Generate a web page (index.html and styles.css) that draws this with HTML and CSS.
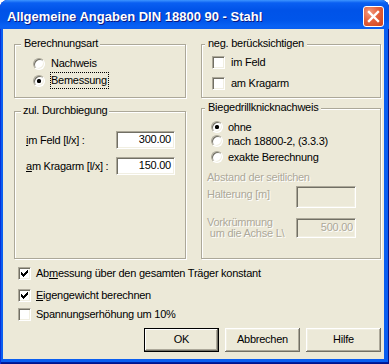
FILE: index.html
```html
<!DOCTYPE html>
<html>
<head>
<meta charset="utf-8">
<link rel="stylesheet" href="styles.css">
</head>
<body>
<div class="window">
  <div class="titlebar">
    <span class="title">Allgemeine Angaben DIN 18800 90 - Stahl</span>
    <span class="close"><svg width="19" height="19" viewBox="0 0 19 19"><path d="M5 5 L14 14 M14 5 L5 14" stroke="#fff" stroke-width="2.4" stroke-linecap="square"/></svg></span>
  </div>
  <div class="client">
    <div class="groups">
      <div class="group">
        <span class="gtitle gt-left">Berechnungsart</span>
        <div class="rows-art">
          <div class="opt"><span class="radio"></span><span class="lbl">Nachweis</span></div>
          <div class="opt"><span class="radio on"></span><span class="lbl focus">Bemessung</span></div>
        </div>
      </div>
      <div class="group">
        <span class="gtitle gt-right">neg. berücksichtigen</span>
        <div class="rows-neg">
          <div class="chk-row"><span class="check"></span><span class="clbl">im Feld</span></div>
          <div class="chk-row"><span class="check"></span><span class="clbl">am Kragarm</span></div>
        </div>
      </div>
      <div class="group g-durch">
        <span class="gtitle gt-left2">zul. Durchbiegung</span>
        <div class="fields">
          <span class="flabel"><u>i</u>m Feld [l/x] :</span><span class="field">300.00</span>
          <span class="flabel"><u>a</u>m Kragarm [l/x] :</span><span class="field">150.00</span>
        </div>
      </div>
      <div class="group">
        <span class="gtitle gt-right">Biegedrillknicknachweis</span>
        <div class="rows-bdk">
          <div class="bopt"><span class="radio on"></span><span class="blbl">ohne</span></div>
          <div class="bopt"><span class="radio"></span><span class="blbl">nach 18800-2, (3.3.3)</span></div>
          <div class="bopt b3"><span class="radio"></span><span class="blbl">exakte Berechnung</span></div>
        </div>
        <div class="dis dis-head">Abstand der seitlichen</div>
        <div class="drow drow-a">
          <span class="dis dlabel-a">Halterung [m]</span>
          <span class="field disabled fa"></span>
        </div>
        <div class="drow drow-b">
          <span class="dis dlabel-b">Vorkrümmung<br>&nbsp;um die Achse L\</span>
          <span class="field disabled fb">500.00</span>
        </div>
      </div>
    </div>
    <div class="opts">
      <div class="orow r1"><span class="check on"><svg width="11" height="11" viewBox="0 0 11 11" shape-rendering="crispEdges"><path d="M8 2H9V5H8V6H7V7H6V8H5V9H4V8H3V7H2V4H3V5H4V6H5V5H6V4H7V3H8Z" fill="#000"/></svg></span><span class="olbl">Ab<u>m</u>essung über den gesamten Träger konstant</span></div>
      <div class="orow r2"><span class="check on"><svg width="11" height="11" viewBox="0 0 11 11" shape-rendering="crispEdges"><path d="M8 2H9V5H8V6H7V7H6V8H5V9H4V8H3V7H2V4H3V5H4V6H5V5H6V4H7V3H8Z" fill="#000"/></svg></span><span class="olbl"><u>E</u>igengewicht berechnen</span></div>
      <div class="orow r3"><span class="check"></span><span class="olbl">Spannungserhöhung um 10%</span></div>
    </div>
    <div class="buttons">
      <span class="btn default">OK</span>
      <span class="btn">Abbrechen</span>
      <span class="btn">Hilfe</span>
    </div>
  </div>
</div>
</body>
</html>
```
FILE: styles.css
```css
* { box-sizing: border-box; }
html, body { margin: 0; padding: 0; background: #fff; }
body {
  width: 389px;
  height: 364px;
  overflow: hidden;
  font-family: "Liberation Sans", Arial, sans-serif;
  font-size: 11px;
  letter-spacing: -0.25px;
  color: #000;
}
u { text-decoration: underline; text-underline-offset: 1px; }

.window {
  width: 389px;
  height: 364px;
  display: flex;
  flex-direction: column;
  background: #0a5ef0;
  border-radius: 8px 8px 0 0;
  overflow: hidden;
  box-shadow: inset 1px 0 #0831d9, inset -1px 0 #00138c, inset 0 -1px #00138c, inset 0 -2px #001ea0;
}

.titlebar {
  height: 29px;
  flex: none;
  display: flex;
  align-items: flex-start;
  padding: 0 5px 0 7px;
  background: linear-gradient(180deg, #3d95ff 0%, #0a5ff2 10%, #0053e8 35%, #0055ea 70%, #0861f4 90%, #0a5ef0 100%);
}
.title {
  padding-top: 9px;
  font-weight: bold;
  font-size: 13px;
  line-height: 15px;
  letter-spacing: 0;
  color: #fff;
  text-shadow: 1px 1px #0a1883;
  white-space: nowrap;
}
.close {
  margin-left: auto;
  margin-top: 6px;
  width: 21px;
  height: 21px;
  border: 1px solid #fff;
  border-radius: 3px;
  background: radial-gradient(circle at 30% 28%, #f39b7f 0%, #e4613d 45%, #cf4219 100%);
  display: flex;
  align-items: center;
  justify-content: center;
}
.close svg { display: block; }

.client {
  flex: 1;
  margin: 0 5px 5px 3px;
  background: #ece9d8;
  display: flex;
  flex-direction: column;
}

.groups {
  display: grid;
  grid-template-columns: 172px 180px;
  grid-template-rows: 54px 151px;
  column-gap: 15px;
  row-gap: 10px;
  margin: 15px 0 0 11px;
}
.group {
  border: 1px solid #aca899;
  box-shadow: inset 1px 1px #fff, 1px 1px #fff;
  display: flex;
  flex-direction: column;
}
.g-durch { margin-top: 3px; }
.gtitle {
  align-self: flex-start;
  margin-top: -8px;
  line-height: 13px;
  height: 13px;
  background: #ece9d8;
  white-space: nowrap;
}
.gt-left { margin-left: 6px; padding: 0 2px 0 3px; }
.gt-left2 { margin-left: 6px; padding: 0 2px 0 2px; }
.gt-right { margin-left: 3px; padding: 0 3px 0 3px; }

/* radios */
.radio {
  flex: none;
  width: 12px;
  height: 12px;
  border-radius: 50%;
  background: #fff;
  border: 1px solid;
  border-color: #aca899 #fff #fff #aca899;
  box-shadow: inset 1px 1px #716f64, inset -1px -1px #f1efe2;
  display: flex;
  align-items: center;
  justify-content: center;
}
.radio.on::after {
  content: "";
  width: 4px;
  height: 4px;
  border-radius: 1.5px;
  background: #000;
}

.rows-art { margin-top: 5px; padding-left: 18px; }
.opt { display: flex; align-items: center; height: 17px; }
.opt .lbl {
  margin-left: 5px;
  height: 17px;
  line-height: 15px;
  border: 1px dotted transparent;
  padding-right: 1px;
}
.opt .lbl.focus { border-color: #000; }

/* checkboxes */
.check {
  flex: none;
  width: 13px;
  height: 13px;
  background: #fff;
  border: 1px solid;
  border-color: #aca899 #fff #fff #aca899;
  box-shadow: inset 1px 1px #716f64, inset -1px -1px #f1efe2;
}
.check svg { display: block; }

.rows-neg { margin-top: 2px; padding-left: 10px; }
.chk-row { display: flex; align-items: center; height: 21px; }
.clbl { margin-left: 6px; line-height: 13px; }

/* fields */
.fields {
  display: grid;
  grid-template-columns: 90px 59px;
  grid-auto-rows: 18px;
  row-gap: 8px;
  margin-top: 14px;
  padding-left: 11px;
  align-items: center;
}
.flabel { line-height: 13px; white-space: nowrap; }
.field {
  height: 18px;
  background: #fff;
  border: 1px solid;
  border-color: #aca899 #fff #fff #aca899;
  box-shadow: inset 1px 1px #716f64, inset -1px -1px #f1efe2;
  text-align: right;
  padding: 0 3px 0 2px;
  line-height: 15px;
}
.field.disabled {
  background: #ece9d8;
  color: #aca899;
  text-shadow: 1px 1px #fff;
}

/* Biegedrillknick */
.rows-bdk { margin-top: 6px; padding-left: 9px; }
.bopt { display: flex; align-items: center; height: 14px; }
.bopt.b3 { margin-top: 2px; }
.blbl { margin-left: 5px; line-height: 13px; white-space: nowrap; }

.dis { color: #aca899; text-shadow: 1px 1px #fff; }
.dis-head { margin-top: 7px; padding-left: 5px; line-height: 13px; white-space: nowrap; }
.drow {
  display: grid;
  grid-template-columns: 89px 60px;
  padding-left: 5px;
  align-items: start;
}
.drow-a { margin-top: 2px; }
.drow-b { margin-top: 10px; }
.dlabel-a { margin-top: 2px; line-height: 13px; white-space: nowrap; }
.dlabel-b { margin-top: -1px; line-height: 10.5px; white-space: nowrap; }
.fa { height: 22px; }
.fb { height: 20px; line-height: 17px; padding-right: 2px; }

/* options */
.opts { padding-left: 15px; }
.orow { display: flex; align-items: center; height: 16px; }
.orow.r1 { margin-top: 6px; }
.orow.r2 { margin-top: 6px; }
.orow.r3 { margin-top: 3px; }
.olbl { margin-left: 5px; line-height: 13px; white-space: nowrap; }

/* buttons */
.buttons {
  display: flex;
  justify-content: flex-end;
  gap: 6px;
  margin-top: 6px;
  padding-right: 3px;
}
.btn {
  width: 75px;
  height: 24px;
  background: #ece9d8;
  display: flex;
  align-items: center;
  justify-content: center;
  padding-bottom: 2px;
  box-shadow: inset -1px -1px #716f64, inset 1px 1px #fff, inset -2px -2px #aca899, inset 2px 2px #f1efe2;
}
.btn.default {
  box-shadow: inset 0 0 0 1px #000, inset -2px -2px #716f64, inset 2px 2px #fff, inset -3px -3px #aca899;
}
```
